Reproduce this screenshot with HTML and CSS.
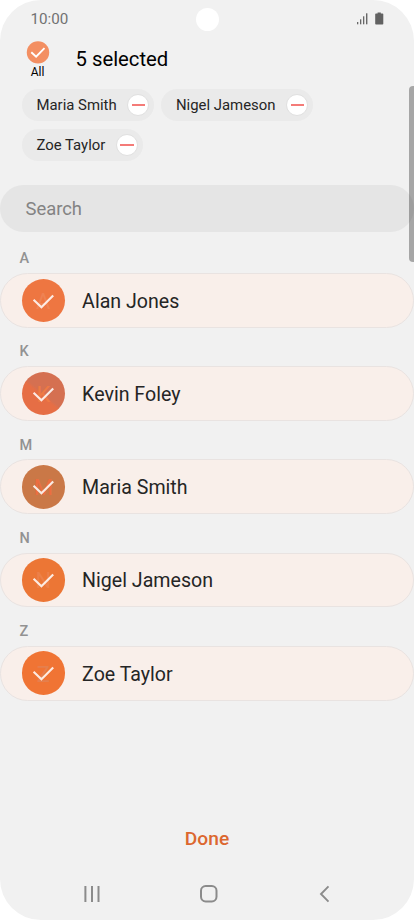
FILE: index.html
```
<!DOCTYPE html>
<html lang="en">
<head>
<meta charset="utf-8">
<title>Select contacts</title>
<link rel="stylesheet" href="styles.css">
</head>
<body>
<svg class="defs" width="0" height="0" aria-hidden="true">
  <symbol id="check" viewBox="0 0 44 44"><path d="M11.700 21 L19.600 28.500 L31.500 16.700" fill="none" stroke="#fff" stroke-opacity=".85" stroke-width="2.200"/></symbol>
</svg>
<div class="phone">
  <div class="status">
    <span class="time">10:00</span>
    <span class="camera"></span>
    <svg class="status-icons" width="28" height="14" viewBox="0 0 28 14">
      <g fill="#686868"><rect x="0" y="10" width="1.3" height="2.3"/><rect x="3" y="7.3" width="1.3" height="5"/><rect x="6" y="4.3" width="1.3" height="8"/><rect x="9" y="1.3" width="1.4" height="11"/></g>
      <path fill="#626262" d="M20.6 .4h3.2v1h1.7q.8 0 .8.8v9.5q0 .8-.8.8h-6.5q-.8 0-.8-.8V2.200q0-.8.8-.8h1.600z"/>
    </svg>
  </div>
  <header class="header">
    <div class="all">
      <svg width="24" height="24" viewBox="0 0 24 24"><circle cx="12" cy="12.400" r="11.200" fill="#f38f62"/><path d="M5.300 12.200 L10.100 16.700 L18.500 8.200" fill="none" stroke="#fff" stroke-width="1.900"/></svg>
      <span>All</span>
    </div>
    <h1>5 selected</h1>
  </header>
  <div class="chips">
    <div class="chip"><span>Maria Smith</span><i class="remove"></i></div>
    <div class="chip"><span>Nigel Jameson</span><i class="remove"></i></div>
    <div class="chip"><span>Zoe Taylor</span><i class="remove"></i></div>
  </div>
  <div class="search">Search</div>
  <section><h2>A</h2><div class="row"><div class="avatar a">A<svg><use href="#check"/></svg></div><span>Alan Jones</span></div></section>
  <section><h2>K</h2><div class="row"><div class="avatar k">K<svg><use href="#check"/></svg></div><span>Kevin Foley</span></div></section>
  <section><h2>M</h2><div class="row"><div class="avatar m">M<svg><use href="#check"/></svg></div><span>Maria Smith</span></div></section>
  <section><h2>N</h2><div class="row"><div class="avatar n">N<svg><use href="#check"/></svg></div><span>Nigel Jameson</span></div></section>
  <section><h2>Z</h2><div class="row"><div class="avatar z">Z<svg><use href="#check"/></svg></div><span>Zoe Taylor</span></div></section>
  <div class="footer">
    <div class="done">Done</div>
    <nav class="nav">
      <svg width="20" height="20" viewBox="0 0 20 20"><path d="M2.400 2v16M9 2v16M15.500 2v16" stroke="#8b8b8b" stroke-width="2" fill="none"/></svg>
      <svg width="20" height="20" viewBox="0 0 20 20"><rect x="2" y="2" width="15.500" height="15.500" rx="4.700" stroke="#8b8b8b" stroke-width="2" fill="none"/></svg>
      <svg width="20" height="20" viewBox="0 0 20 20"><path d="M13.500 2.400 L6 10 L13.500 17.600" stroke="#8b8b8b" stroke-width="1.900" fill="none"/></svg>
    </nav>
  </div>
  <div class="scrollbar"></div>
</div>
</body>
</html>
```
FILE: styles.css
```
* { box-sizing: border-box; }
body { margin: 0; background: #fff; font-family: Roboto, "Liberation Sans", sans-serif; color: #252525; }
.defs { position: absolute; }
.phone { position: relative; width: 414px; height: 920px; background: #f1f1f1; border-radius: 41px; overflow: hidden; display: flex; flex-direction: column; }
.status { flex: none; height: 38px; padding: 0 29px 0 30.500px; display: grid; grid-template-columns: 1fr 24px 1fr; align-items: center; }
.time { font-size: 15.200px; color: #727272; }
.camera { width: 23px; height: 23px; border-radius: 50%; background: #fff; }
.status-icons { justify-self: end; }
.header { flex: none; height: 50px; padding: 2px 0 0 24px; display: flex; align-items: flex-start; }
.all { width: 27px; display: flex; flex-direction: column; align-items: center; font-size: 12px; line-height: 14px; color: #000; }
.all span { margin-top: 1px; }
h1 { margin: 5px 0 0 24.500px; font-size: 20.300px; line-height: 28px; font-weight: 400; color: #000; }
.chips { flex: none; height: 97px; padding: .5px 0 0 21.500px; display: flex; flex-wrap: wrap; align-content: flex-start; gap: 8px 6.500px; }
.chip { height: 32.300px; padding: 0 5px 0 15px; border-radius: 17px; background: #eaeaea; display: flex; align-items: center; gap: 10.800px; font-size: 14.900px; }
.chip span { padding-top: 1px; }
.remove { width: 22px; height: 22px; border-radius: 50%; border: 1px solid #e0e0e0; background: #fff; display: flex; align-items: center; justify-content: center; }
.remove::after { content: ""; width: 13.500px; height: 2px; background: #f47b78; }
.search { flex: none; height: 47px; border-radius: 24px; padding-left: 25.500px; background: #e5e5e5; font-size: 18.400px; line-height: 48px; color: #838383; }
section { flex: none; height: 93.200px; }
section:first-of-type { margin-top: 2.800px; }
h2 { margin: 0; height: 38.200px; padding: 15.500px 0 0 19.500px; font-size: 14.500px; line-height: 17px; font-weight: 500; color: #929292; }
.row { height: 54.800px; border: 1px solid #e9e3e1; border-radius: 28px; background: #f9efea; padding-left: 20.500px; display: flex; align-items: center; font-size: 19.600px; }
.row > span { margin-left: 17px; padding-top: 2px; }
.avatar { position: relative; width: 43.600px; height: 43.600px; border-radius: 50%; display: flex; align-items: center; justify-content: center; font-size: 22px; padding-top: 2px; }
.avatar svg { position: absolute; top: 0; left: 0; width: 43.600px; height: 43.600px; }
.a { background: #ee7641; color: #ee8253; }
.k { background: linear-gradient(40deg, #e66e45 45%, #d57051 50%); color: #ee7a44; }
.m { background: #ca7847; color: #ec6d40; }
.n { background: #ec7635; color: #ed8048; }
.z { background: #f07434; color: #e57f4d; }
.footer { margin-top: auto; flex: none; }
.done { text-align: center; font-size: 19.200px; line-height: 24px; font-weight: 500; color: #dc672f; }
.nav { height: 69px; padding: 17px 79.500px 0 82.500px; display: flex; align-items: center; justify-content: space-between; }
.scrollbar { position: absolute; left: 409px; top: 86px; width: 9px; height: 176px; border-radius: 4px; background: rgba(0, 0, 0, .31); }
```
